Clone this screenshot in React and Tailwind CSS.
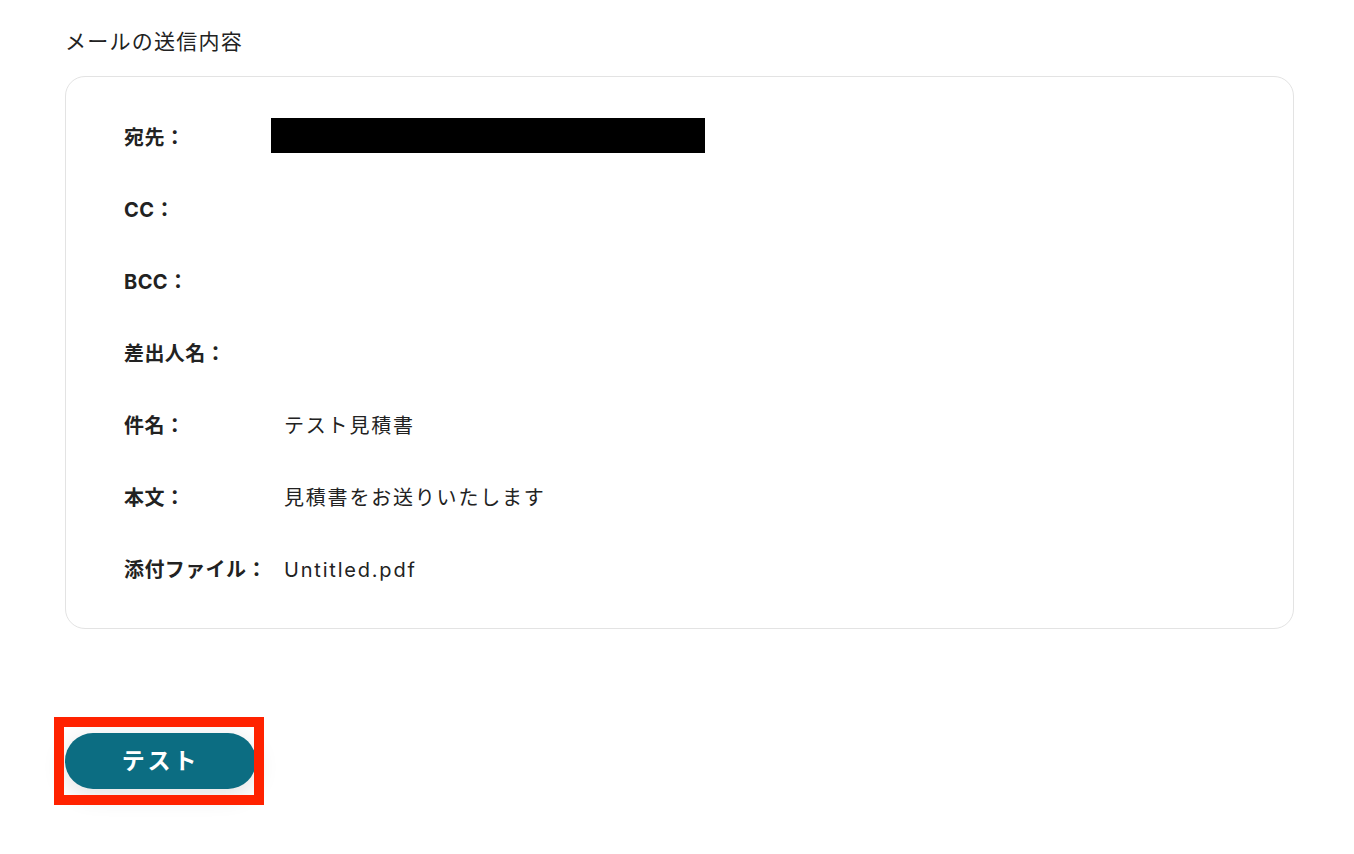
export default function App() {
  const rows = [
    { label: '宛先：', value: null, redacted: true },
    { label: 'CC：', value: '' },
    { label: 'BCC：', value: '' },
    { label: '差出人名：', value: '' },
    { label: '件名：', value: 'テスト見積書' },
    { label: '本文：', value: '見積書をお送りいたします' },
    { label: '添付ファイル：', value: 'Untitled.pdf' },
  ];

  return (
    <div
      className="min-h-screen bg-white px-[65px] pt-[28px] text-[#222]"
      style={{ fontFamily: '"Inter", "Noto Sans CJK JP", sans-serif' }}
    >
      <h2 className="text-[21px] leading-[28px] tracking-[0.06em]">メールの送信内容</h2>

      {/* Mail content card */}
      <div className="mt-[20px] w-[1229px] rounded-[20px] border border-[#e3e3e3] px-[58px] pt-[25px] pb-[22px]">
        {rows.map((row) => (
          <div key={row.label} className="flex h-[72px] items-center">
            <div className="w-[160px] shrink-0 text-[20px] font-bold tracking-[0.02em]">{row.label}</div>
            {row.redacted ? (
              <div className="mb-[5px] ml-[-13px] h-[35px] w-[434px] bg-black" />
            ) : (
              <div className="text-[20px] tracking-[0.09em]">{row.value}</div>
            )}
          </div>
        ))}
      </div>

      {/* Test button */}
      <div className="relative mt-[104px] w-[191px]">
        <button className="flex h-[56px] w-[191px] items-center justify-center rounded-full bg-[#0c6d82] text-[23px] font-bold tracking-[0.12em] text-white shadow-[0_6px_24px_rgba(0,0,0,0.12)]">
          テスト
        </button>
        <div className="pointer-events-none absolute left-[-11px] top-[-16px] h-[88px] w-[210px] border-[10px] border-[#ff2200]" />
      </div>
    </div>
  );
}
